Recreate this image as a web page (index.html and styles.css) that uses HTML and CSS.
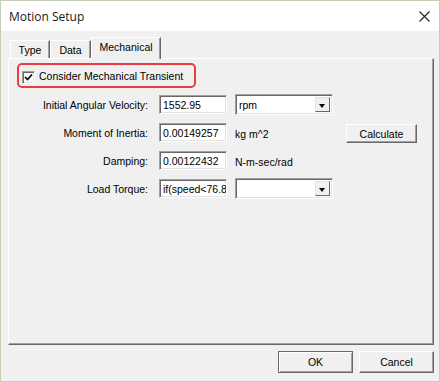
FILE: index.html
```html
<!DOCTYPE html>
<html lang="en">
<head>
    <meta charset="UTF-8">
    <title>Motion Setup</title>
    <link rel="stylesheet" href="styles.css">
</head>
<body>
    <div class="window">
        <div class="titlebar">
            <span class="title">Motion Setup</span>
            <svg class="close" width="11" height="11" viewBox="0 0 11 11">
                <path d="M0.5 0.5 L10.5 10.5 M10.5 0.5 L0.5 10.5" stroke="#222" stroke-width="1.1"/>
            </svg>
        </div>
        <div class="client">
            <div class="tabs">
                <div class="tab tab-type">Type</div>
                <div class="tab tab-data">Data</div>
                <div class="tab tab-mech active">Mechanical</div>
            </div>
            <div class="panel">
                <div class="highlight">
                    <span class="checkbox">
                        <svg width="9" height="9" viewBox="0 0 9 9">
                            <path d="M1 4 L3.5 6.5 L8 1.5" stroke="#000" stroke-width="1.6" fill="none"/>
                        </svg>
                    </span>
                    <span>Consider Mechanical Transient</span>
                </div>
                <div class="form">
                    <label>Initial Angular Velocity:</label>
                    <div class="field">1552.95</div>
                    <div class="combo"><span class="combo-text">rpm</span><span class="combo-btn"></span></div>
                    <span></span>

                    <label>Moment of Inertia:</label>
                    <div class="field">0.00149257</div>
                    <span class="unit">kg m^2</span>
                    <button class="btn btn-calc">Calculate</button>

                    <label>Damping:</label>
                    <div class="field">0.00122432</div>
                    <span class="unit">N-m-sec/rad</span>
                    <span></span>

                    <label>Load Torque:</label>
                    <div class="field">if(speed&lt;76.8</div>
                    <div class="combo"><span class="combo-text"></span><span class="combo-btn"></span></div>
                    <span></span>
                </div>
            </div>
            <div class="footer">
                <button class="btn btn-default">OK</button>
                <button class="btn">Cancel</button>
            </div>
        </div>
    </div>
</body>
</html>
```

FILE: styles.css
```css
body {
    margin: 0;
    font-family: "Liberation Sans", Arial, sans-serif;
    font-size: 10.5px;
    color: #000;
}

.window {
    width: 440px;
    height: 382px;
    box-sizing: border-box;
    border: 1px solid #c4d0b2;
    background-color: #f0f0f0;
    display: flex;
    flex-direction: column;
}

.titlebar {
    height: 30px;
    flex: none;
    background-color: #ffffff;
    display: flex;
    align-items: center;
    justify-content: space-between;
    padding: 0 9px 0 8px;
}

.title {
    font-family: "Open Sans", "Noto Sans", sans-serif;
    font-size: 12px;
    color: #1a1a1a;
}

.close {
    margin-top: 1px;
}

.client {
    flex: 1;
    display: flex;
    flex-direction: column;
    padding: 6px 5px 8px 7px;
}

.tabs {
    height: 21px;
    display: flex;
    align-items: flex-end;
    padding-left: 2px;
}

.tab {
    height: 18px;
    box-sizing: border-box;
    border-top: 1px solid #ffffff;
    border-left: 1px solid #ffffff;
    border-right: 1px solid #696969;
    box-shadow: inset -1px 0 #a0a0a0;
    padding-top: 3px;
    text-align: center;
}

.tab-type { width: 40px; }
.tab-data { width: 41px; }

.tab-mech {
    width: 70px;
    height: 22px;
    margin-bottom: -1px;
    padding-top: 3px;
    background-color: #f0f0f0;
    position: relative;
    z-index: 1;
}

.panel {
    flex: 1;
    border: 1px solid;
    border-color: #ffffff #696969 #696969 #ffffff;
    box-shadow: inset -1px -1px #a0a0a0;
    padding: 4px 0 0 8px;
}

.highlight {
    width: 172px;
    height: 21px;
    border: 2px solid #ec3b42;
    border-radius: 5px;
    display: flex;
    align-items: center;
    gap: 4px;
    padding-left: 3px;
}

.checkbox {
    width: 13px;
    height: 13px;
    box-sizing: border-box;
    margin-top: 3px;
    border: 1px solid;
    border-color: #a0a0a0 #ffffff #ffffff #a0a0a0;
    box-shadow: inset 1px 1px #696969, inset -1px -1px #e3e3e3;
    background-color: #ffffff;
    display: flex;
    align-items: center;
    justify-content: center;
}

.form {
    margin-top: 6px;
    margin-left: -8px;
    display: grid;
    grid-template-columns: 142px 68px 98px auto;
    grid-auto-rows: 21px;
    column-gap: 8px;
    row-gap: 7px;
    align-items: center;
}

.form label {
    text-align: right;
    padding-right: 3px;
}

.field {
    height: 19px;
    box-sizing: border-box;
    border: 1px solid;
    border-color: #a0a0a0 #ffffff #ffffff #a0a0a0;
    box-shadow: inset 1px 1px #696969, inset -1px -1px #e3e3e3;
    background-color: #ffffff;
    padding: 3px 0 0 3px;
    overflow: hidden;
    white-space: nowrap;
}

.combo {
    height: 21px;
    box-sizing: border-box;
    border: 1px solid;
    border-color: #a0a0a0 #ffffff #ffffff #a0a0a0;
    box-shadow: inset 1px 1px #696969, inset -1px -1px #e3e3e3;
    background-color: #ffffff;
    display: flex;
    padding: 2px;
}

.combo-text {
    flex: 1;
    padding: 2px 0 0 1px;
}

.combo-btn {
    width: 15px;
    box-sizing: border-box;
    background-color: #f0f0f0;
    border: 1px solid;
    border-color: #e3e3e3 #696969 #696969 #e3e3e3;
    position: relative;
}

.combo-btn::after {
    content: "";
    position: absolute;
    left: 3px;
    top: 6px;
    border-left: 3.5px solid transparent;
    border-right: 3.5px solid transparent;
    border-top: 4px solid #000;
}

.unit {
    padding-top: 2px;
}

.btn {
    font-family: "Liberation Sans", Arial, sans-serif;
    font-size: 10.5px;
    color: #000;
    background-color: #f0f0f0;
    box-sizing: border-box;
    border: 1px solid;
    border-color: #ffffff #696969 #696969 #ffffff;
    box-shadow: inset -1px -1px #a0a0a0;
    padding: 0;
}

.btn-calc {
    width: 71px;
    height: 19px;
    margin-left: 5px;
    margin-top: 2px;
}

.footer {
    margin-top: 6px;
    display: flex;
    justify-content: flex-end;
    gap: 6px;
}

.footer .btn {
    width: 75px;
    height: 22px;
}

.btn-default {
    border-color: #696969;
    box-shadow: inset 1px 1px #ffffff, inset -1px -1px #a0a0a0;
}
```
